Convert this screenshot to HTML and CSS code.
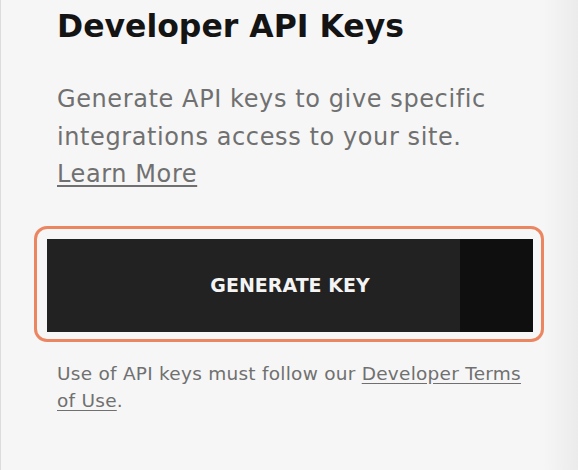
FILE: index.html
```html
<!DOCTYPE html>
<html lang="en">

<head>
    <meta charset="UTF-8">
    <meta name="viewport" content="width=device-width, initial-scale=1.0">
    <title>Developer API Keys</title>
    <link rel="stylesheet" href="styles.css">
</head>

<body>
    <div id="panel">
        <h1 class="title">Developer API Keys</h1>
        <p class="intro">Generate API keys to give specific integrations access to your site. <a href="#">Learn More</a></p>
        <div class="focus-ring">
            <button class="generate">GENERATE KEY</button>
        </div>
        <p class="terms">Use of API keys must follow our <a href="#">Developer Terms of Use</a>.</p>
    </div>
</body>
</html>
```
FILE: styles.css
```css
html,
body {
    margin: 0;
    height: 100%;
}

body {
    background: #f6f6f6;
    font-family: "DejaVu Sans", "Liberation Sans", sans-serif;
}

#panel {
    box-sizing: border-box;
    height: 470px;
    border-left: 1px solid #dcdcdc;
    padding: 6px 48px 0 56px;
    background: linear-gradient(to right, #f6f6f6 94%, #ebebeb 100%);
}

.title {
    margin: 0;
    font-size: 31.5px;
    font-weight: 700;
    color: #141414;
    line-height: 40px;
}

.intro {
    margin: 35px 0 0;
    font-size: 24px;
    line-height: 37.5px;
    letter-spacing: 0.6px;
    color: #707070;
}

.intro a,
.terms a {
    color: inherit;
    text-underline-offset: 3px;
}

.focus-ring {
    margin: 32px 0 0 -23px;
    width: 510px;
    box-sizing: border-box;
    padding: 10px 8px 7px 10px;
    border: 3px solid #ec8661;
    border-radius: 13px;
}

.generate {
    display: block;
    width: 100%;
    height: 93px;
    border: 0;
    padding: 0;
    background: linear-gradient(to right, #222 85%, #0f0f0f 85%);
    color: #f4f4f4;
    font-family: inherit;
    font-size: 19px;
    font-weight: 700;
}

.terms {
    margin: 18px -8px 0 0;
    font-size: 18.5px;
    line-height: 27px;
    letter-spacing: 0.25px;
    color: #707070;
}
```
